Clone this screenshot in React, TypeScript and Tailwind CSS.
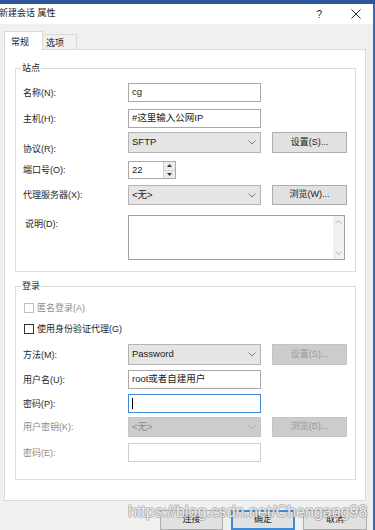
import type { ReactNode } from "react";

function Chevron({ color = "#7a7a7a" }: { color?: string }) {
  return (
    <svg width="8" height="5" viewBox="0 0 8 5" className="shrink-0">
      <path d="M0.5 0.5 L4 4 L7.5 0.5" fill="none" stroke={color} strokeWidth="0.9" />
    </svg>
  );
}

function Row({
  label,
  mt,
  h,
  labelClass = "",
  disabled = false,
  children,
}: {
  label: string;
  mt: string;
  h: string;
  labelClass?: string;
  disabled?: boolean;
  children: ReactNode;
}) {
  return (
    <div className={`flex items-center ${mt} ${h}`}>
      <div
        className={`w-[105px] shrink-0 text-[9px] leading-[12px] ${disabled ? "text-[#8c8c8c]" : "text-[#1e1e1e]"} ${labelClass}`}
      >
        {label}
      </div>
      {children}
    </div>
  );
}

function Input({ value, className = "" }: { value?: string; className?: string }) {
  return (
    <div
      className={`w-[133px] h-full border border-[#a8a8a8] bg-white flex items-center px-[3px] text-[9.5px] text-[#1a1a1a] ${className}`}
    >
      {value}
    </div>
  );
}

function Select({ value, disabled = false }: { value: string; disabled?: boolean }) {
  return (
    <div
      className={`w-[133px] h-full border flex items-center justify-between pl-[3px] pr-[4px] text-[9.5px] ${
        disabled
          ? "bg-[#cccccc] border-[#c4c4c4] text-[#8a8a8a]"
          : "bg-[#e5e5e5] border-[#b4b4b4] text-[#1a1a1a]"
      }`}
    >
      <span>{value}</span>
      <Chevron color={disabled ? "#a8a8a8" : "#707070"} />
    </div>
  );
}

function Btn({ label, disabled = false }: { label: string; disabled?: boolean }) {
  return (
    <div
      className={`ml-[11px] w-[75px] h-full border flex items-center justify-center text-[9px] ${
        disabled
          ? "bg-[#cccccc] border-[#c4c4c4] text-[#9a9a9a]"
          : "bg-[#e1e1e1] border-[#adadad] text-[#1a1a1a]"
      }`}
    >
      {label}
    </div>
  );
}

function Group({ title, className, children }: { title: string; className: string; children: ReactNode }) {
  return (
    <div className={`relative ml-[10px] w-[341px] border border-[#dcdcdc] pl-[7px] ${className}`}>
      <span className="absolute left-[5px] top-[-7px] bg-white px-[1px] text-[9px] leading-[12px] text-[#1e1e1e]">
        {title}
      </span>
      {children}
    </div>
  );
}

function Check({ label, disabled = false, mt }: { label: string; disabled?: boolean; mt: string }) {
  return (
    <div className={`flex items-center h-[10px] ${mt} pl-[1px]`}>
      <div
        className={`w-[10px] h-[10px] bg-white border ${disabled ? "border-[#c0c0c0]" : "border-[#333333]"}`}
      />
      <span className={`ml-[3px] text-[9px] leading-[12px] ${disabled ? "text-[#8c8c8c]" : "text-[#1e1e1e]"}`}>
        {label}
      </span>
    </div>
  );
}

export default function App() {
  return (
    <div className="relative w-[375px] h-[530px] overflow-hidden bg-[#f0f0f0] font-['Liberation_Sans','Noto_Sans_CJK_SC',sans-serif]">
      <div className="h-[4px] bg-[#2b579a]" />
      <div className="flex h-[526px]">
        <div className="w-[373px] flex flex-col">
          {/* title bar */}
          <div className="h-[20px] bg-white flex items-center text-[9px] text-[#1a1a1a]">
            <span className="ml-[-1px]">新建会话 属性</span>
            <span className="ml-auto mr-[29px] text-[10px] text-[#222]">?</span>
            <svg width="10" height="10" viewBox="0 0 10 10" className="mr-[12px]">
              <path d="M0.5 0.5 L9.5 9.5 M9.5 0.5 L0.5 9.5" stroke="#222" strokeWidth="1" />
            </svg>
          </div>

          {/* tabs */}
          <div className="mt-[7px] pl-[4px] flex items-end h-[19px] mb-[-1px]">
            <div className="relative z-10 w-[39px] h-[19px] bg-white border border-b-0 border-[#d9d9d9] text-[9px] text-[#1a1a1a] pl-[6px] pt-[4px] leading-[12px]">
              常规
            </div>
            <div className="w-[34px] h-[16px] bg-[#f0f0f0] border border-l-0 border-[#d9d9d9] text-[9px] text-[#1a1a1a] pl-[3px] pt-[2px] leading-[12px]">
              选项
            </div>
          </div>

          {/* panel */}
          <div className="ml-[4px] w-[362px] h-[452px] border border-[#dadada] bg-white">
            <Group title="站点" className="mt-[18px] h-[204px]">
              <Row label="名称(N):" mt="mt-[14px]" h="h-[19px]">
                <Input value="cg" />
              </Row>
              <Row label="主机(H):" mt="mt-[7px]" h="h-[19px]">
                <Input value="#这里输入公网IP" />
              </Row>
              <Row label="协议(R):" mt="mt-[4px]" h="h-[21px]" labelClass="mt-[12px]">
                <Select value="SFTP" />
                <Btn label="设置(S)..." />
              </Row>
              <Row label="端口号(O):" mt="mt-[8px]" h="h-[18px]">
                <div className="w-[48px] h-full border border-[#a8a8a8] bg-white flex">
                  <div className="flex-1 flex items-center px-[3px] text-[9.5px] text-[#1a1a1a]">22</div>
                  <div className="w-[12px] flex flex-col border-l border-[#cfcfcf]">
                    <div className="flex-1 flex items-center justify-center bg-[#ececec] border-b border-[#d4d4d4]">
                      <svg width="5" height="3" viewBox="0 0 5 3">
                        <path d="M0 3 L2.5 0 L5 3 Z" fill="#333" />
                      </svg>
                    </div>
                    <div className="flex-1 flex items-center justify-center bg-[#ececec]">
                      <svg width="5" height="3" viewBox="0 0 5 3">
                        <path d="M0 0 L2.5 3 L5 0 Z" fill="#333" />
                      </svg>
                    </div>
                  </div>
                </div>
              </Row>
              <Row label="代理服务器(X):" mt="mt-[6px]" h="h-[20px]">
                <Select value="<无>" />
                <Btn label="浏览(W)..." />
              </Row>
              <div className="flex items-start mt-[10px] h-[45px]">
                <div className="w-[105px] shrink-0 mt-[3px] pl-[2px] text-[9px] leading-[12px] text-[#1e1e1e]">说明(D):</div>
                <div className="w-[217px] h-full border border-[#a0a0a0] bg-white flex justify-end">
                  <div className="w-[11px] h-full bg-[#f0f0f0] flex flex-col items-center justify-between py-[4px]">
                    <svg width="7" height="4" viewBox="0 0 7 4">
                      <path d="M0.5 3.5 L3.5 0.5 L6.5 3.5" fill="none" stroke="#a8a8a8" strokeWidth="0.9" />
                    </svg>
                    <svg width="7" height="4" viewBox="0 0 7 4">
                      <path d="M0.5 0.5 L3.5 3.5 L6.5 0.5" fill="none" stroke="#a8a8a8" strokeWidth="0.9" />
                    </svg>
                  </div>
                </div>
              </div>
            </Group>

            <Group title="登录" className="mt-[14px] h-[194px]">
              <Check label="匿名登录(A)" disabled mt="mt-[16px]" />
              <Check label="使用身份验证代理(G)" mt="mt-[11px]" />
              <Row label="方法(M):" mt="mt-[10px]" h="h-[21px]">
                <Select value="Password" />
                <Btn label="设置(S)..." disabled />
              </Row>
              <Row label="用户名(U):" mt="mt-[5px]" h="h-[19px]">
                <Input value="root或者自建用户" />
              </Row>
              <Row label="密码(P):" mt="mt-[5px]" h="h-[19px]">
                <div className="w-[133px] h-full border border-[#3c8ad8] bg-white flex items-center pl-[3px]">
                  <div className="w-[1px] h-[11px] bg-black" />
                </div>
              </Row>
              <Row label="用户密钥(K):" mt="mt-[4px]" h="h-[20px]" disabled>
                <Select value="<无>" disabled />
                <Btn label="浏览(B)..." disabled />
              </Row>
              <Row label="密码(E):" mt="mt-[6px]" h="h-[19px]" disabled>
                <div className="w-[133px] h-full border border-[#cfcfcf] bg-white" />
              </Row>
            </Group>
          </div>

          {/* dialog buttons */}
          <div className="mt-[9px] flex justify-end pr-[6px] h-[20px] gap-[8px]">
            <div className="w-[63px] h-full bg-[#e1e1e1] border border-[#adadad] flex items-center justify-center text-[9px] text-[#1a1a1a]">
              连接
            </div>
            <div className="w-[64px] h-full bg-[#e1e1e1] border-2 border-[#3c8ad8] flex items-center justify-center text-[9px] text-[#1a1a1a]">
              确定
            </div>
            <div className="w-[64px] h-full bg-[#e1e1e1] border border-[#adadad] flex items-center justify-center text-[9px] text-[#1a1a1a]">
              取消
            </div>
          </div>
        </div>
        <div className="w-[2px] bg-[#3a6bb0]" />
      </div>

      {/* watermark */}
      <div className="absolute left-[128px] top-[502px] text-[16px] leading-[20px] font-['Liberation_Sans',sans-serif] text-white/80 [text-shadow:1px_0_0_rgba(140,140,140,0.55),-1px_0_0_rgba(140,140,140,0.55),0_1px_0_rgba(140,140,140,0.55),0_-1px_0_rgba(140,140,140,0.55)]">
        https://blog.csdn.net/Chengang98
      </div>
    </div>
  );
}
